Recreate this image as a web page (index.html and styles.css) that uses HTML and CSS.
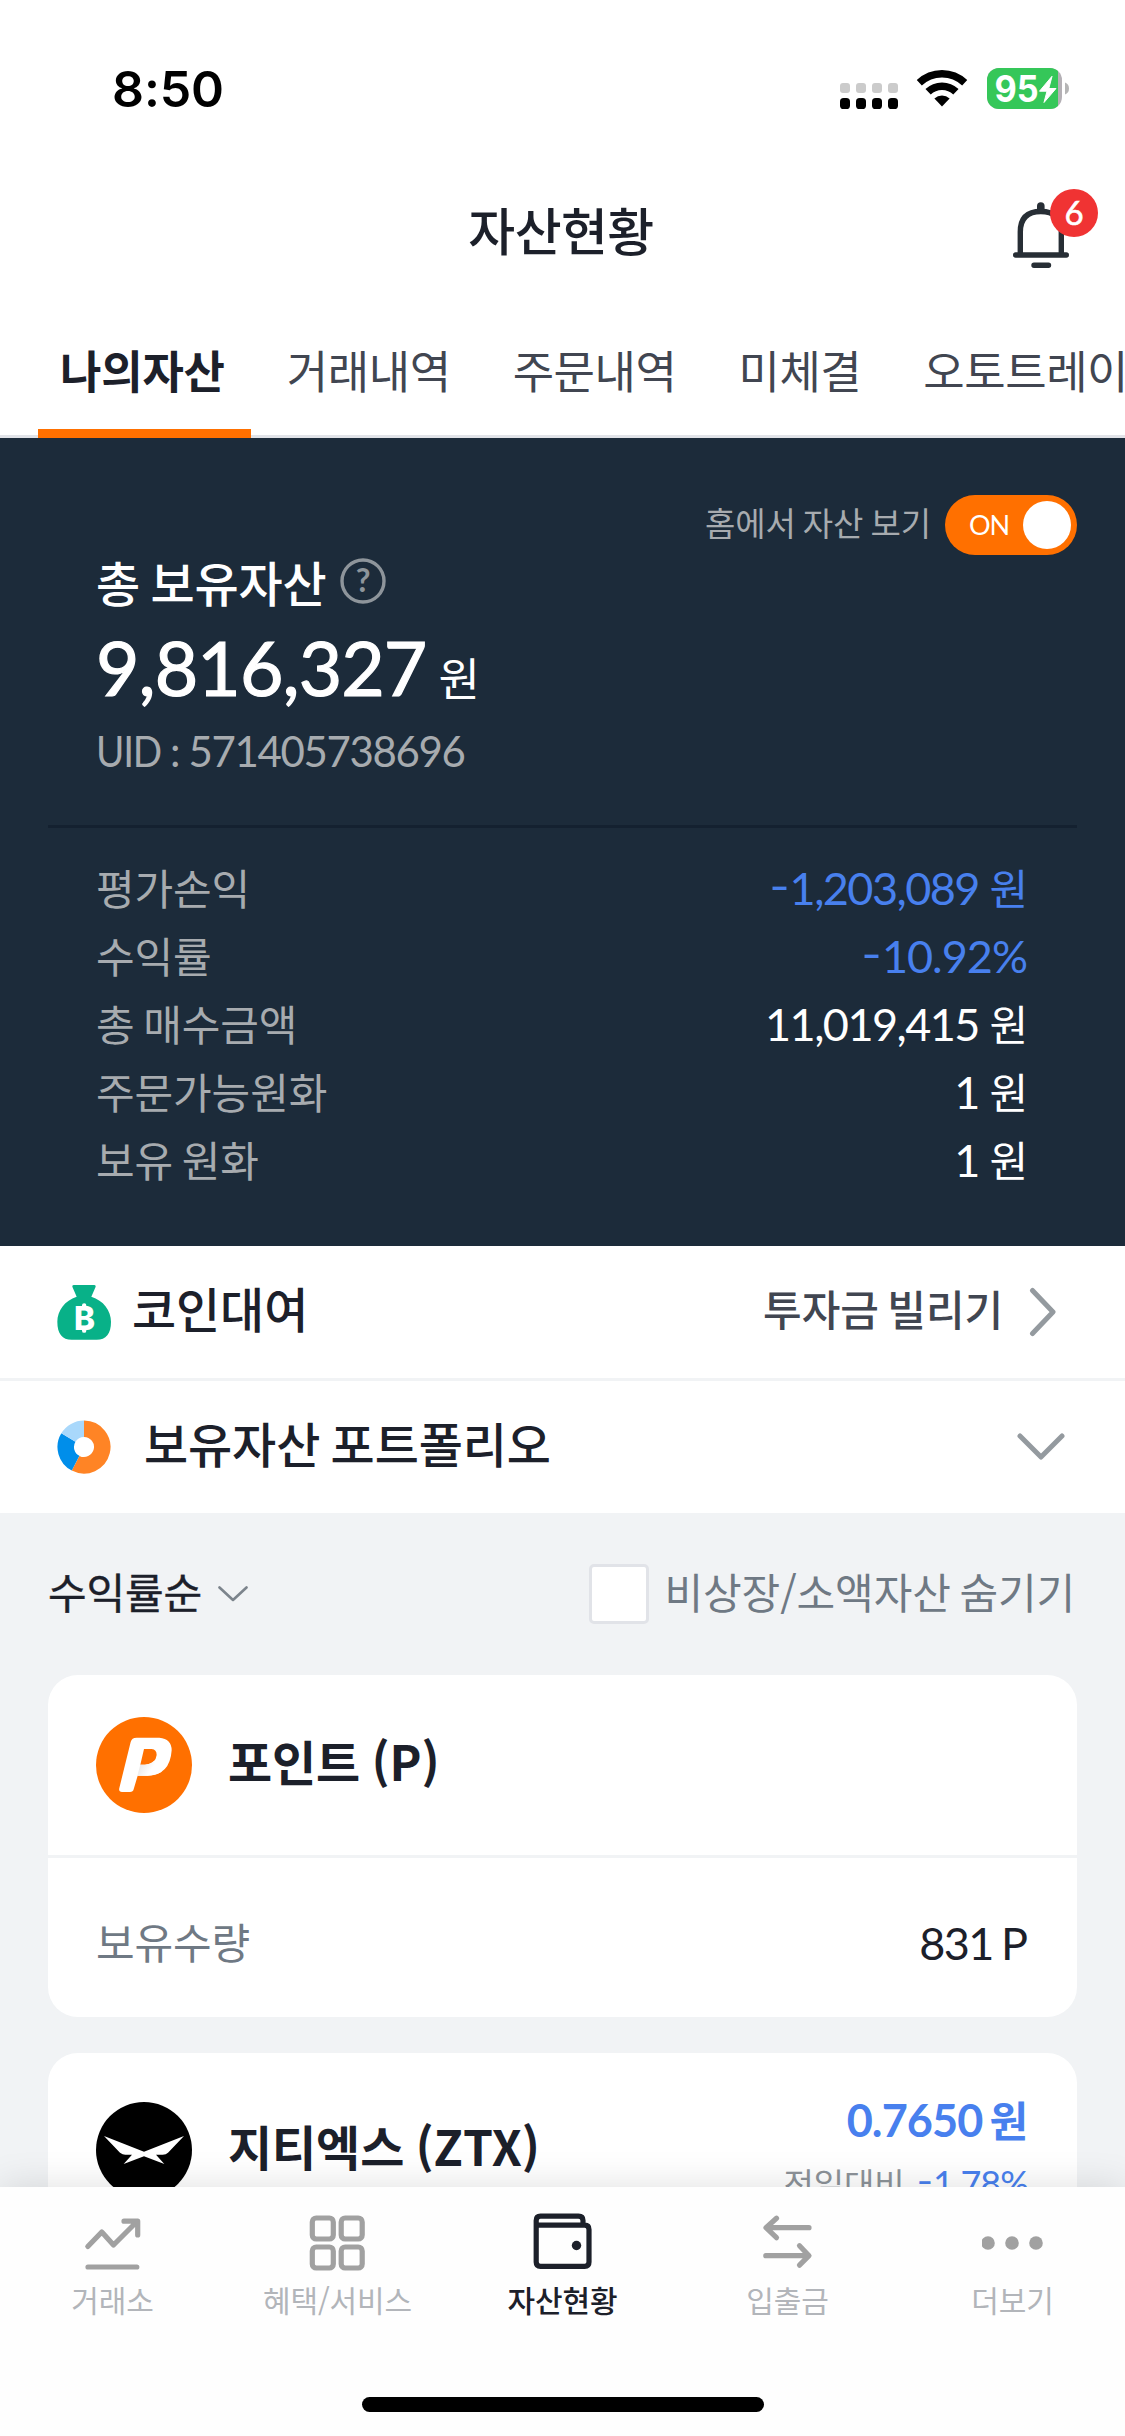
FILE: index.html
```html
<!DOCTYPE html>
<html lang="ko">
<head>
<meta charset="utf-8">
<title>자산현황</title>
<link rel="stylesheet" href="styles.css">
</head>
<body>
<div class="screen">
  <main class="content">
    <div class="status">
      <span class="clock">8:50</span>
      <svg class="signal" width="58" height="26" viewBox="0 0 58 26">
        <g fill="#cbcbcb"><rect width="10" height="10" rx="3"/><rect x="16" width="10" height="10" rx="3"/><rect x="32" width="10" height="10" rx="3"/><rect x="48" width="10" height="10" rx="3"/></g>
        <g><rect y="15" width="10" height="11" rx="3.6"/><rect x="16" y="15" width="10" height="11" rx="3.6"/><rect x="32" y="15" width="10" height="11" rx="3.6"/><rect x="48" y="15" width="10" height="11" rx="3.6"/></g>
      </svg>
      <svg class="wifi" width="52" height="38" viewBox="0 0 52 38">
        <g fill="none" stroke="#000">
          <path d="M3.3 13.8A33 33 0 0 1 48.7 13.8" stroke-width="7.4"/>
          <path d="M12.1 22.8A20 20 0 0 1 39.9 22.8" stroke-width="7.6"/>
        </g>
        <path d="M26 37.4L18.4 29.4A11.6 11.6 0 0 1 33.6 29.4Z"/>
      </svg>
      <svg class="battery" width="83" height="41" viewBox="0 0 83 41">
        <clipPath id="cell"><rect width="75" height="41" rx="12"/></clipPath>
        <g clip-path="url(#cell)"><rect width="75" height="41" fill="#b4b0b5"/><rect width="71" height="41" fill="#35c759"/></g>
        <path d="M78 14.5Q82 16 82 20.5T78 26.5Z" fill="#b5b5b5"/>
        <text class="level" x="7.5" y="34" textLength="44" lengthAdjust="spacingAndGlyphs">95</text>
        <path d="M65 8.3L52.5 23.2H60L57 34.5L69 20.5H61.8Z" fill="#fff" stroke="#fff" stroke-width="1" stroke-linejoin="round"/>
      </svg>
    </div>

    <header class="header">
      <h1>자산현황</h1>
      <div class="alerts">
        <svg width="58" height="68" viewBox="0 0 58 68" fill="none" stroke="#272e35" stroke-width="5.4" stroke-linecap="round">
          <path d="M8.3 53V31Q8.3 10.5 28.8 10.5T49.3 31V53M3.7 54H54.3M22 64.2H36.5"/>
          <path d="M28.8 5V9" stroke-width="7.6"/>
        </svg>
        <span class="badge">6</span>
      </div>
    </header>

    <nav class="tabs">
      <span class="tab tab-active">나의자산</span>
      <span class="tab">거래내역</span>
      <span class="tab">주문내역</span>
      <span class="tab">미체결</span>
      <span class="tab">오토트레이</span>
    </nav>

    <section class="summary">
      <div class="home-toggle">
        <span>홈에서 자산 보기</span>
        <div class="switch"><span>ON</span><i class="knob"></i></div>
      </div>
      <div class="total">
        <div class="total-title">총 보유자산
          <svg width="46" height="46" viewBox="0 0 46 46"><circle cx="23" cy="23" r="21" fill="none" stroke="#8e959b" stroke-width="3.4"/><text class="help" x="23" y="34" text-anchor="middle">?</text></svg>
        </div>
        <div class="total-value"><span class="big">9,816,327</span><span class="won">원</span></div>
        <div class="uid"><span class="uid-num"><span class="uid-key">UID</span> : 571405738696</span></div>
      </div>
      <dl class="figures">
        <div><dt>평가손익</dt><dd class="down"><span class="num"><span class="minus">-</span>1,203,089</span> 원</dd></div>
        <div><dt>수익률</dt><dd class="down"><span class="num rate"><span class="minus">-</span>10.92%</span></dd></div>
        <div><dt>총 매수금액</dt><dd><span class="num">11,019,415</span> 원</dd></div>
        <div><dt>주문가능원화</dt><dd><span class="num">1</span> 원</dd></div>
        <div><dt>보유 원화</dt><dd><span class="num">1</span> 원</dd></div>
      </dl>
    </section>

    <section class="links">
      <div class="link">
        <svg width="54" height="55" viewBox="51 78 162 165">
          <path fill="#08b188" d="M101 78H163Q168 78 167 83L154 113C190 124 213 155 213 188C213 224 198 242 170 242H95C67 242 52 224 52 188C52 155 75 124 110 113L97 83Q96 78 101 78Z"/>
          <text class="coin" x="102" y="213" textLength="63" lengthAdjust="spacingAndGlyphs">B</text>
          <path d="M132.500 139V145M132.500 209V215" stroke="#fff" stroke-width="13" stroke-linecap="round"/>
        </svg>
        <span class="link-title">코인대여</span>
        <span class="link-more">투자금 빌리기</span>
        <svg class="go" width="28" height="50" viewBox="0 0 28 50" fill="none" stroke="#949a9f" stroke-width="5" stroke-linecap="round" stroke-linejoin="round"><path d="M3.500 3.500L24 25L3.500 46.500"/></svg>
      </div>
      <div class="link">
        <svg width="54" height="54" viewBox="-27 -27 54 54">
          <g fill="none" stroke-width="16.500">
            <path stroke="#ff8425" d="M0-18.250A18.250 18.250 0 1 1-8.400 16.200"/>
            <path stroke="#008eea" d="M-8.400 16.200A18.250 18.250 0 0 1-15.600-9.500"/>
            <path stroke="#a9d8fb" d="M-15.600-9.500A18.250 18.250 0 0 1 0-18.250"/>
          </g>
        </svg>
        <span class="link-title link-title-wide">보유자산 포트폴리오</span>
        <svg class="fold" width="48" height="28" viewBox="0 0 48 28" fill="none" stroke="#949a9f" stroke-width="5" stroke-linecap="round" stroke-linejoin="round"><path d="M3 3L24 24L45 3"/></svg>
      </div>
    </section>

    <div class="filters">
      <span class="sort">수익률순</span>
      <svg class="sort-arrow" width="30" height="16" viewBox="0 0 30 16" fill="none" stroke="#7c848c" stroke-width="2.600" stroke-linecap="round" stroke-linejoin="round"><path d="M1.500 1.500L15 14L28.500 1.500"/></svg>
      <i class="checkbox"></i>
      <span class="hide-label">비상장/소액자산 숨기기</span>
    </div>

    <article class="card">
      <div class="card-head">
        <svg width="96" height="96" viewBox="108 81 288 288">
          <defs><linearGradient id="shade" x1="0" y1="0" x2="1" y2=".4"><stop offset="0" stop-color="#e2e0df"/><stop offset=".7" stop-color="#fff"/></linearGradient></defs>
          <circle cx="252" cy="225" r="144" fill="#ff7000"/>
          <path fill="#fff" fill-rule="evenodd" d="M230 143H298Q335 146 335 181Q330 256 262 257H233L221 298Q219 306 210 306H186Q175 305 178 294L212 156Q215 143 230 143ZM252 177L241 224H255Q287 222 290 195Q290 178 275 177Z"/>
          <path fill="url(#shade)" d="M241 224H255Q272 223 281 213L305 245Q286 257 262 257H232Z"/>
        </svg>
        <span class="coin-name">포인트 (P)</span>
      </div>
      <div class="card-row"><span class="card-label">보유수량</span><span class="card-value">831<span class="unit">P</span></span></div>
    </article>

    <article class="card">
      <div class="card-head card-head-price">
        <svg width="96" height="96" viewBox="108 1236 288 288">
          <circle cx="252" cy="1380" r="144"/>
          <path fill="#fff" d="M132 1338L252 1385L372 1338L324 1388Q318 1394 308 1394H288L313 1422L252 1399L191 1422L216 1394H196Q188 1394 180 1388Z"/>
        </svg>
        <span class="coin-name">지티엑스 (ZTX)</span>
        <div class="quote">
          <div class="price"><span class="price-num">0.7650</span><span class="price-won">원</span></div>
          <div class="change">전일대비<span class="change-num"><span class="minus">-</span>1.78%</span></div>
        </div>
      </div>
    </article>
  </main>

  <nav class="tabbar">
    <div class="items">
      <div class="item">
        <svg width="62" height="62" viewBox="81.500 2212 62 62"><path d="M87.300 2246.500L101.300 2232L113 2245L136 2222M123.500 2221.200H137.200V2235M87.500 2267H136.300"/></svg>
        <span>거래소</span>
      </div>
      <div class="item">
        <svg width="62" height="62" viewBox="307 2212 62 62"><rect x="312.300" y="2218" width="21" height="21" rx="4"/><rect x="341.200" y="2218" width="21" height="21" rx="4"/><rect x="312.300" y="2247" width="21" height="21" rx="4"/><rect x="341.200" y="2247" width="21" height="21" rx="4"/></svg>
        <span>혜택/서비스</span>
      </div>
      <div class="item item-active">
        <svg width="62" height="62" viewBox="532 2212 62 62"><path d="M536.200 2225V2262Q536.200 2266.300 540.500 2266.300H584.700Q589 2266.300 589 2262V2229.500Q589 2225.200 584.700 2225.200H536.200V2220.500Q536.200 2216.200 540.500 2216.200H578.500Q583 2216.200 583 2220.500V2225"/><circle class="dot" cx="576.500" cy="2245.500" r="4.700"/></svg>
        <span>자산현황</span>
      </div>
      <div class="item">
        <svg width="62" height="62" viewBox="756.500 2212 62 62"><path d="M808.500 2227.700H766M776 2218.200L765.500 2227.700L776 2237.700M765.300 2255.700H808M799 2245.700L808.500 2255.700L799 2265.200"/></svg>
        <span>입출금</span>
      </div>
      <div class="item">
        <svg width="62" height="62" viewBox="982 2212 62 62"><g class="dots"><circle cx="988" cy="2243" r="6.800"/><circle cx="1012" cy="2243" r="6.800"/><circle cx="1036" cy="2243" r="6.800"/></g></svg>
        <span>더보기</span>
      </div>
    </div>
    <i class="home-bar"></i>
  </nav>
</div>
</body>
</html>
```
FILE: styles.css
```css
* { box-sizing: border-box; }
body { margin: 0; background: #fff; }
svg { display: block; flex: none; }
h1, dl, dd { margin: 0; }

.screen {
  width: 1125px;
  height: 2436px;
  display: flex;
  flex-direction: column;
  overflow: hidden;
  font-family: "Noto Sans CJK KR", sans-serif;
  color: #1c202a;
  letter-spacing: -.1px;
  word-spacing: -3px;
  white-space: nowrap;
}
.content {
  height: 2187px;
  flex: none;
  overflow: hidden;
  background: #f1f3f5;
}

/* status bar */
.status {
  height: 132px;
  padding: 68px 55px 0 112px;
  display: flex;
  align-items: flex-start;
  background: #fff;
}
.clock {
  margin-right: auto;
  font: 600 50px/43px Inter, sans-serif;
  color: #000;
}
.signal { margin-top: 15px; }
.wifi { margin: 1px 19px 0 18px; }
.level { font: 700 37px Inter, sans-serif; fill: #fff; }

/* title */
.header {
  height: 192px;
  padding-right: 3px;
  display: flex;
  justify-content: center;
  background: #fff;
  position: relative;
}
h1 { font-size: 51px; font-weight: 500; line-height: 194px; letter-spacing: -.6px; }
.alerts { position: absolute; left: 1012px; top: 69px; }
.badge {
  position: absolute;
  left: 38px;
  top: -12px;
  width: 48px;
  height: 48px;
  border-radius: 50%;
  background: #f03333;
  color: #fff;
  font: 33px/47px Lato, sans-serif;
  -webkit-text-stroke: .6px #fff;
  text-align: center;
}

.tabs {
  height: 114px;
  padding-left: 38px;
  display: flex;
  gap: 13px;
  background: #fff;
  box-shadow: inset 0 -3px #e1e3e8;
  overflow: hidden;
}
.tab {
  flex: none;
  padding: 0 26px 0 23px;
  font-size: 45px;
  line-height: 92px;
  letter-spacing: -.45px;
  color: #414651;
}
.tab-active {
  padding: 0 26px 0 22px;
  font-weight: 700;
  letter-spacing: -.2px;
  color: #1c202a;
  border-bottom: 9px solid #ff7000;
}

/* asset summary */
.summary {
  height: 808px;
  padding: 57px 48px 0;
  background: #1c2b3a;
  color: #fff;
}
.home-toggle {
  height: 60px;
  display: flex;
  justify-content: flex-end;
  align-items: center;
  gap: 14px;
  font-size: 33px;
  line-height: 56px;
  color: #a7abaf;
}
.home-toggle > span { padding-bottom: 6px; word-spacing: -2px; }
.switch {
  width: 132px;
  height: 60px;
  padding: 0 6px 0 24px;
  border-radius: 30px;
  background: #ff7000;
  display: flex;
  align-items: center;
  justify-content: space-between;
  font: 27px Lato, sans-serif;
  letter-spacing: -1px;
  color: #fff;
}
.switch span { padding-bottom: 2px; }
.knob { width: 48px; height: 48px; border-radius: 50%; background: #fff; }
.total { padding: 0 48px; height: 270px; }
.total-title {
  display: flex;
  align-items: center;
  gap: 13px;
  height: 52px;
  font-size: 48px;
  font-weight: 500;
  line-height: 52px;
}
.help { font: 700 32px Lato, sans-serif; fill: #8e959b; }
.total-value { margin-top: 30px; font-size: 42px; line-height: 82px; }
.big { font: 75px/0 Lato, sans-serif; letter-spacing: -.9px; -webkit-text-stroke: 1.200px #fff; }
.won { margin-left: 12px; font-size: 45px; line-height: 0; }
.uid { font-size: 42px; line-height: 60px; color: #a7abaf; }
.uid-num { font: 42px/0 Lato, sans-serif; letter-spacing: -1.350px; word-spacing: 0; }
.uid-key {
  display: inline-block;
  margin-right: -6px;
  transform: scaleX(.92);
  transform-origin: left;
}
.figures {
  border-top: 3px solid #142130;
  padding: 25px 48px 0;
  font-size: 42px;
  line-height: 68px;
}
.figures div { display: flex; justify-content: space-between; }
dt { color: #a7abaf; }
dd { padding-right: 1px; word-spacing: -1px; }
.down { color: #4880ee; }
.num { font: 45px/0 Lato, sans-serif; letter-spacing: -1.550px; }
.rate { letter-spacing: -1px; margin-right: 1px; }
.minus { display: inline-block; margin-right: 3px; transform: translateY(-3px) scaleX(1.250); }

/* shortcuts */
.links { background: #fff; }
.link {
  height: 132px;
  padding: 0 60px 0 57px;
  display: flex;
  align-items: center;
}
.link + .link { box-shadow: 0 -3px #f1f3f5; margin-top: 3px; }
.link-title {
  margin: 0 auto 0 21px;
  padding-bottom: 10px;
  font-size: 48px;
  font-weight: 500;
  line-height: 60px;
}
.link-title-wide { margin-left: 33px; }
.link-more {
  padding-bottom: 9px;
  font-size: 42px;
  font-weight: 500;
  line-height: 60px;
  color: #414651;
}
.go { margin: 0 8px 0 26px; }
.coin { font: 800 100px Inter, sans-serif; fill: #fff; }

.filters {
  height: 162px;
  padding: 0 50px 0 48px;
  display: flex;
  align-items: center;
  font-size: 42px;
  line-height: 60px;
}
.sort, .hide-label { padding-bottom: 6px; }
.sort { -webkit-text-stroke: .4px #1c202a; }
.sort-arrow { margin-left: 16px; }
.checkbox {
  width: 60px;
  height: 60px;
  margin: 0 16px 0 auto;
  border: 3px solid #e1e3e8;
  border-radius: 5px;
  background: #fff;
}
.hide-label { color: #6f7984; }

/* holdings */
.card {
  margin: 0 48px 36px;
  border-radius: 30px;
  background: #fff;
}
.card-head {
  height: 180px;
  padding: 0 48px;
  display: flex;
  align-items: center;
}
.card-head-price { height: 194px; }
.coin-name {
  margin: 0 auto 0 36px;
  padding-bottom: 10px;
  font-size: 48px;
  font-weight: 700;
  line-height: 60px;
  word-spacing: -2px;
}
.card-row {
  height: 162px;
  padding: 7px 48px 0;
  border-top: 3px solid #f1f3f5;
  display: flex;
  align-items: center;
  justify-content: space-between;
}
.card-label { font-size: 42px; line-height: 60px; color: #6f7984; }
.card-value { padding-top: 4px; font: 45px/60px Lato, sans-serif; letter-spacing: -1.500px; }
.unit { margin: 0 1px 0 8px; letter-spacing: 0; }
.quote { align-self: flex-start; padding: 39px 1px 0 0; text-align: right; }
.price { font-size: 42px; font-weight: 700; line-height: 54px; color: #4880ee; }
.price-num { font: 700 45px/0 Lato, sans-serif; letter-spacing: -.9px; }
.price-won { margin-left: 7px; }
.change { margin-top: 15px; font-size: 33px; line-height: 44px; color: #8d9399; }
.change-num { margin-left: 13px; font: 36px/0 Lato, sans-serif; letter-spacing: -1px; color: #4880ee; }

/* bottom navigation */
.tabbar {
  position: relative;
  z-index: 1;
  height: 249px;
  flex: none;
  display: flex;
  flex-direction: column;
  align-items: center;
  background: #fefefe;
  box-shadow: 0 0 36px rgba(0, 0, 0, .13);
}
.items { display: flex; width: 100%; height: 210px; padding-top: 25px; }
.item {
  width: 225px;
  display: flex;
  flex-direction: column;
  align-items: center;
  font-size: 30px;
  line-height: 51px;
  color: #b2b5ba;
}
.item svg { fill: none; stroke: #a1a1a1; stroke-width: 5.200px; stroke-linecap: round; stroke-linejoin: round; }
.item .dots { fill: #a1a1a1; stroke: none; }
.item-active { color: #1c202a; font-weight: 500; }
.item-active svg { stroke: #1c202a; }
.item-active .dot { fill: #1c202a; stroke: none; }
.home-bar { width: 402px; height: 15px; border-radius: 8px; background: #000; }
```
